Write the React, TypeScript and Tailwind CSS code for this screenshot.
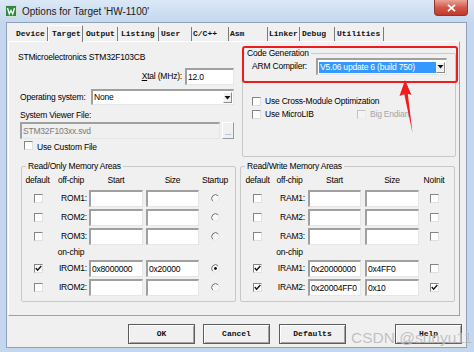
import React from "react";

function Check({ checked = false, disabled = false }: { checked?: boolean; disabled?: boolean }) {
  return (
    <span
      className={
        disabled
          ? "inline-flex items-center justify-center w-[9px] h-[9px] shrink-0 bg-[#f4f4f4] border border-t-[#c2c2c2] border-l-[#c2c2c2] border-r-[#ececec] border-b-[#ececec]"
          : "inline-flex items-center justify-center w-[9px] h-[9px] shrink-0 bg-white border border-t-[#858585] border-l-[#858585] border-r-[#e0e0e0] border-b-[#e0e0e0]"
      }
    >
      {checked && (
        <svg width="7" height="7" viewBox="0 0 7 7">
          <path d="M0.8 3.1 L2.6 5.2 L6.3 1.1" stroke="#1a1a1a" strokeWidth="1.5" fill="none" />
        </svg>
      )}
    </span>
  );
}

function Radio({ checked = false }: { checked?: boolean }) {
  return (
    <svg width="9" height="9" viewBox="0 0 9 9">
      <circle cx="4.5" cy="4.5" r="3.8" fill="#f7f7f7" />
      <path d="M1.8 7.2 A3.8 3.8 0 0 1 7.2 1.8" stroke="#6f6f6f" strokeWidth="1" fill="none" />
      <path d="M7.2 1.8 A3.8 3.8 0 0 1 1.8 7.2" stroke="#e4e4e4" strokeWidth="1" fill="none" />
      {checked && <circle cx="4.5" cy="4.5" r="1.4" fill="#111111" />}
    </svg>
  );
}

function Field({ className = "", value = "", disabled = false }: { className?: string; value?: string; disabled?: boolean }) {
  return (
    <div
      className={
        (disabled
          ? "bg-[#f0f0f0] text-[#7a7a7a] "
          : "bg-white text-black ") +
        "h-[17px] shrink-0 border-t-2 border-l-2 border-t-[#a0a0a0] border-l-[#a0a0a0] border-b border-r border-b-[#e6e6e6] border-r-[#e6e6e6] pl-[1px] leading-[14px] whitespace-nowrap overflow-hidden " +
        className
      }
    >
      {value}
    </div>
  );
}

function Arrow() {
  return (
    <svg width="7" height="4" viewBox="0 0 7 4">
      <path d="M0.5 0 L6.5 0 L3.5 3.5 Z" fill="#111111" />
    </svg>
  );
}

function DropBtn() {
  return (
    <div className="w-[9px] h-[11px] ml-auto mr-[1px] flex items-center justify-center bg-[#f0f0f0] border border-t-white border-l-white border-r-[#8a8a8a] border-b-[#8a8a8a]">
      <Arrow />
    </div>
  );
}

function RomRow({ label, start = "", size = "", def = false, sel = false }: { label: string; start?: string; size?: string; def?: boolean; sel?: boolean }) {
  return (
    <div className="flex items-center h-[17px]">
      <div className="w-[33px] flex justify-center">
        <Check checked={def} />
      </div>
      <div className="w-[32px] text-right">{label}</div>
      <Field className="ml-[2px] w-[54px]" value={start} />
      <Field className="ml-[3px] w-[53px]" value={size} />
      <div className="w-[32px] flex justify-center">
        <Radio checked={sel} />
      </div>
    </div>
  );
}

function RamRow({ label, start = "", size = "", def = false, noinit = false }: { label: string; start?: string; size?: string; def?: boolean; noinit?: boolean }) {
  return (
    <div className="flex items-center h-[17px]">
      <div className="w-[33px] flex justify-center">
        <Check checked={def} />
      </div>
      <div className="w-[31px] text-right">{label}</div>
      <Field className="ml-[3px] w-[53px]" value={start} />
      <Field className="ml-[4px] w-[54px]" value={size} />
      <div className="w-[30px] flex justify-center">
        <Check checked={noinit} />
      </div>
    </div>
  );
}

function Btn({ children, className = "" }: { children: React.ReactNode; className?: string }) {
  return (
    <div
      className={
        "h-[20px] w-[67px] shrink-0 flex items-center justify-center border border-[#5c5c5c] bg-[#f0f0f0] shadow-[inset_1px_1px_0_#ffffff,inset_-1px_-1px_0_#a3a3a3] [font-family:'Liberation_Mono',monospace] text-[8px] font-bold tracking-normal text-[#111] " +
        className
      }
    >
      {children}
    </div>
  );
}

const tabs = [
  { t: "Device", w: "w-[38px] pl-[6px]" },
  { t: "Target", w: "w-[35px] pl-[3px]", sel: true },
  { t: "Output", w: "w-[35px] pl-[3px]" },
  { t: "Listing", w: "w-[41px] pl-[3px]" },
  { t: "User", w: "w-[33px] pl-[2px]" },
  { t: "C/C++", w: "w-[37px] pl-[1px]" },
  { t: "Asm", w: "w-[39px] pl-[1px]" },
  { t: "Linker", w: "w-[32px] pl-[1px]" },
  { t: "Debug", w: "w-[35px] pl-[2px]" },
  { t: "Utilities", w: "w-[49px] pl-[2px]" },
];

export default function App() {
  return (
    <div className="relative w-[474px] h-[352px] overflow-hidden bg-[#c4d7ee] [font-family:'Liberation_Sans',Arial,sans-serif] text-[8.5px] tracking-[-0.2px] text-black flex flex-col">
      {/* Title bar */}
      <div className="h-[22px] shrink-0 flex items-center pl-[5px] bg-gradient-to-b from-[#dbe8f6] to-[#c5d8ee]">
        <svg width="12" height="12" viewBox="0 0 12 12">
          <rect x="0.5" y="0.5" width="11" height="11" fill="#2e8b3c" stroke="#cfe3cf" />
          <path d="M2.5 3 L4.3 9 L6 5.5 L7.7 9 L9.5 3" stroke="#ffffff" strokeWidth="1.3" fill="none" />
        </svg>
        <span className="ml-[5px] text-[10px] tracking-normal text-[#1a1a1a]">Options for Target 'HW-1100'</span>
        <div className="ml-auto mr-[6px] self-start w-[34px] h-[16px] rounded-b-[4px] border border-t-0 border-[#8c3a30] bg-gradient-to-b from-[#e9a396] via-[#d2584a] to-[#c0392b] flex items-center justify-center">
          <svg width="9" height="8" viewBox="0 0 9 8">
            <path d="M1 0.8 L8 7.2 M8 0.8 L1 7.2" stroke="#ffffff" strokeWidth="1.8" />
          </svg>
        </div>
      </div>

      {/* Client area */}
      <div className="ml-[6px] mr-[7px] h-[326px] shrink-0 bg-[#f0f0f0] border border-[#8ea2bc] flex flex-col">
        {/* Tabs */}
        <div className="mt-[1px] ml-[3px] h-[17px] flex items-end [font-family:'Liberation_Mono',monospace] text-[8px] font-bold tracking-normal text-[#111]">
          {tabs.map((tb) =>
            tb.sel ? (
              <div
                key={tb.t}
                className={tb.w + " relative z-10 h-[17px] mb-[-1px] pt-[3px] bg-[#f0f0f0] border-t border-l border-t-white border-l-white border-r border-r-[#7a7a7a] leading-[10px]"}
              >
                {tb.t}
              </div>
            ) : (
              <div key={tb.t} className={tb.w + " h-[14px] pt-[2px] border-r border-r-[#7a7a7a] leading-[10px]"}>
                {tb.t}
              </div>
            )
          )}
        </div>

        {/* Panel */}
        <div className="ml-[1px] w-[452px] h-[275px] shrink-0 border border-t-white border-l-white border-r-[#a0a0a0] border-b-[#a0a0a0] flex pl-[9px]">
          {/* Left column */}
          <div className="w-[218px] shrink-0 flex flex-col pt-[10px]">
            <div className="h-[10px] leading-[10px]">STMicroelectronics STM32F103CB</div>
            <div className="mt-[6px] h-[17px] flex items-center">
              <div className="w-[164px] text-right">
                <span className="underline">X</span>tal (MHz):
              </div>
              <Field className="ml-[3px] w-[49px]" value="12.0" />
            </div>
            <div className="mt-[4px] h-[16px] flex items-center">
              <div className="ml-[2px] w-[71px]">Operating system:</div>
              <div className="w-[143px] h-[16px] bg-white border-t-2 border-l-2 border-t-[#a0a0a0] border-l-[#a0a0a0] border-b border-r border-b-[#e6e6e6] border-r-[#e6e6e6] flex items-center pl-[1px]">
                <span>None</span>
                <DropBtn />
              </div>
            </div>
            <div className="mt-[5px] ml-[2px] h-[10px] leading-[10px]">System Viewer File:</div>
            <div className="mt-[2px] h-[17px] flex items-center">
              <Field className="ml-[2px] w-[200px]" value="STM32F103xx.svd" disabled />
              <div className="ml-[2px] w-[12px] h-[17px] flex items-end justify-center pb-[3px] border border-t-white border-l-white border-r-[#9a9a9a] border-b-[#9a9a9a] text-[#8a8a8a] leading-[6px]">
                ...
              </div>
            </div>
            <div className="mt-[3px] h-[10px] flex items-center">
              <div className="ml-[6px]">
                <Check />
              </div>
              <span className="ml-[4px]">Use Custom File</span>
            </div>

            <fieldset className="mt-[9px] ml-[3px] w-[215px] border border-[#c8c8c8] rounded-[2px]">
              <legend className="ml-[4px] px-[2px] h-[10px] leading-[10px]">Read/Only Memory Areas</legend>
              <div className="pt-[4px] pb-[5px] flex flex-col">
                <div className="h-[10px] leading-[10px] flex">
                  <div className="w-[31px] text-center">default</div>
                  <div className="w-[36px] text-center">off-chip</div>
                  <div className="w-[54px] text-center">Start</div>
                  <div className="ml-[3px] w-[53px] text-center">Size</div>
                  <div className="w-[32px] text-center">Startup</div>
                </div>
                <div className="mt-[5px] flex flex-col gap-[2px]">
                  <RomRow label="ROM1:" />
                  <RomRow label="ROM2:" />
                  <RomRow label="ROM3:" />
                </div>
                <div className="mt-[2px] h-[10px] leading-[10px] flex">
                  <div className="w-[33px]" />
                  <div className="w-[32px] text-center">on-chip</div>
                </div>
                <div className="mt-[3px] flex flex-col gap-[2px]">
                  <RomRow label="IROM1:" start="0x8000000" size="0x20000" def sel />
                  <RomRow label="IROM2:" />
                </div>
              </div>
            </fieldset>
          </div>

          {/* Right column */}
          <div className="ml-[4px] w-[216px] shrink-0 flex flex-col">
            <fieldset className="mt-[6px] ml-[2px] w-[214px] border border-[#c8c8c8] rounded-[2px]">
              <legend className="ml-[2px] px-[2px] h-[10px] leading-[10px]">Code Generation</legend>
              <div className="pl-[9px] pb-[37px] flex flex-col">
                <div className="h-[17px] flex items-center">
                  <div className="w-[64px]">ARM Compiler:</div>
                  <div className="w-[131px] h-[17px] bg-white border-t-2 border-l-2 border-t-[#a0a0a0] border-l-[#a0a0a0] border-b border-r border-b-[#e6e6e6] border-r-[#e6e6e6] flex items-center">
                    <div className="ml-[1px] w-[119px] h-[11px] bg-[#3399ff] text-white leading-[11px] pl-[1px] whitespace-nowrap">
                      V5.06 update 6 (build 750)
                    </div>
                    <DropBtn />
                  </div>
                </div>
                <div className="mt-[21px] h-[10px] flex items-center">
                  <Check />
                  <span className="ml-[4px]">Use Cross-Module Optimization</span>
                </div>
                <div className="mt-[3px] h-[10px] flex items-center">
                  <div className="w-[105px] flex items-center">
                    <Check />
                    <span className="ml-[4px]">Use MicroLIB</span>
                  </div>
                  <Check disabled />
                  <span className="ml-[4px] text-[#a6a6a6]">Big Endian</span>
                </div>
              </div>
            </fieldset>

            <fieldset className="mt-[4px] w-[215px] border border-[#c8c8c8] rounded-[2px]">
              <legend className="ml-[4px] px-[2px] h-[10px] leading-[10px]">Read/Write Memory Areas</legend>
              <div className="pt-[4px] pb-[5px] flex flex-col">
                <div className="h-[10px] leading-[10px] flex">
                  <div className="w-[33px] text-center">default</div>
                  <div className="w-[31px] text-center">off-chip</div>
                  <div className="ml-[3px] w-[53px] text-center">Start</div>
                  <div className="ml-[4px] w-[54px] text-center">Size</div>
                  <div className="w-[30px] text-center">NoInit</div>
                </div>
                <div className="mt-[5px] flex flex-col gap-[2px]">
                  <RamRow label="RAM1:" />
                  <RamRow label="RAM2:" />
                  <RamRow label="RAM3:" />
                </div>
                <div className="mt-[2px] h-[10px] leading-[10px] flex">
                  <div className="w-[33px]" />
                  <div className="w-[31px] text-center">on-chip</div>
                </div>
                <div className="mt-[3px] flex flex-col gap-[2px]">
                  <RamRow label="IRAM1:" start="0x20000000" size="0x4FF0" def />
                  <RamRow label="IRAM2:" start="0x20004FF0" size="0x10" def noinit />
                </div>
              </div>
            </fieldset>
          </div>
        </div>

        {/* Buttons */}
        <div className="mt-[8px] ml-[121px] flex">
          <Btn>OK</Btn>
          <Btn className="ml-[8px]">Cancel</Btn>
          <Btn className="ml-[9px]">Defaults</Btn>
          <Btn className="ml-[49px]">Help</Btn>
        </div>
      </div>

      {/* Annotation overlay: red box and arrow */}
      <div className="absolute left-[242px] top-[46px] w-[216px] h-[37px] border-2 border-[#ee1c1c] rounded-[3px] pointer-events-none" />
      <svg className="absolute left-0 top-0 pointer-events-none" width="474" height="352" viewBox="0 0 474 352">
        <polygon points="405,80 411.5,95 407.8,93.8 412.5,133 404.3,94.3 399.5,96" fill="#ee1c1c" />
      </svg>

      {/* Watermark */}
      <div className="absolute left-[351px] top-[326px] text-[15.5px] tracking-normal text-[#b4b4b4] opacity-80 [text-shadow:0_0_1px_#ffffff] pointer-events-none whitespace-nowrap">
        CSDN @sunyu11
      </div>
    </div>
  );
}
